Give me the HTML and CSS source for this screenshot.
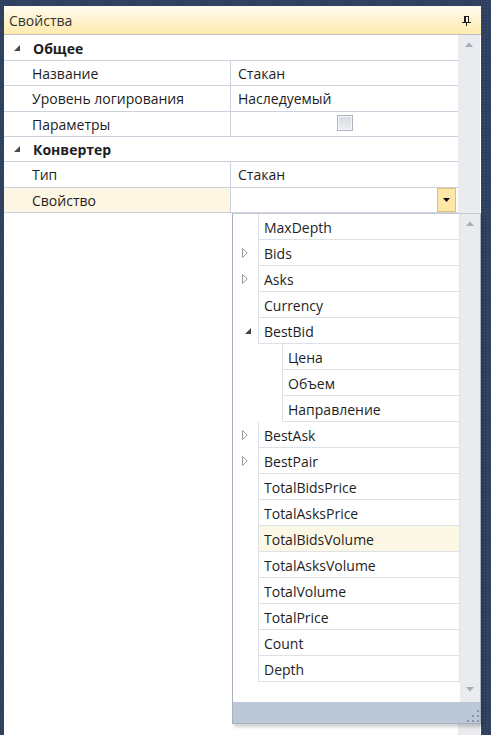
FILE: index.html
```html
<!DOCTYPE html>
<html>
<head>
<meta charset="utf-8">
<link rel="stylesheet" href="styles.css">
</head>
<body>
<div class="frame">
  <div class="panel">
    <div class="titlebar">
      <span class="title">Свойства</span>
      <svg class="pin" width="9" height="10" viewBox="0 0 9 10">
        <rect x="2" y="0" width="2" height="6" fill="#1e1e1e"/>
        <rect x="6" y="0" width="1" height="6" fill="#1e1e1e"/>
        <rect x="2" y="0" width="5" height="1" fill="#1e1e1e"/>
        <rect x="0" y="6" width="9" height="1" fill="#1e1e1e"/>
        <rect x="4" y="7" width="1" height="3" fill="#1e1e1e"/>
      </svg>
    </div>
    <div class="content">
      <div class="grid">
        <div class="row cat first">
          <svg class="exp" width="6" height="6" viewBox="0 0 6 6"><polygon points="6,0 6,6 0,6" fill="#4a4a4a"/></svg>
          <span class="cat-label">Общее</span>
        </div>
        <div class="row prop">
          <div class="name">Название</div>
          <div class="value">Стакан</div>
        </div>
        <div class="row prop">
          <div class="name">Уровень логирования</div>
          <div class="value">Наследуемый</div>
        </div>
        <div class="row prop">
          <div class="name">Параметры</div>
          <div class="value center"><span class="check"></span></div>
        </div>
        <div class="row cat">
          <svg class="exp" width="6" height="6" viewBox="0 0 6 6"><polygon points="6,0 6,6 0,6" fill="#4a4a4a"/></svg>
          <span class="cat-label">Конвертер</span>
        </div>
        <div class="row prop">
          <div class="name">Тип</div>
          <div class="value">Стакан</div>
        </div>
        <div class="row prop active">
          <div class="name">Свойство</div>
          <div class="value">
            <span class="dd-btn">
              <svg width="7" height="4" viewBox="0 0 7 4"><polygon points="0,0 7,0 3.5,4" fill="#111"/></svg>
            </span>
          </div>
        </div>
      </div>
      <div class="vscroll">
        <svg width="8" height="5" viewBox="0 0 8 5"><polygon points="0,5 4,0.5 8,5" fill="#a3adbd"/></svg>
      </div>
    </div>
  </div>

  <div class="popup">
    <div class="pop-body">
      <div class="list">
        <div class="item"><div class="ind"></div><div class="cell">MaxDepth</div></div>
        <div class="item"><div class="ind"><svg class="tri-c" width="6" height="10" viewBox="0 0 6 10"><polygon points="0.5,0.5 5.2,5 0.5,9.5" fill="none" stroke="#9a9a9a" stroke-width="1"/></svg></div><div class="cell">Bids</div></div>
        <div class="item"><div class="ind"><svg class="tri-c" width="6" height="10" viewBox="0 0 6 10"><polygon points="0.5,0.5 5.2,5 0.5,9.5" fill="none" stroke="#9a9a9a" stroke-width="1"/></svg></div><div class="cell">Asks</div></div>
        <div class="item"><div class="ind"></div><div class="cell">Currency</div></div>
        <div class="item"><div class="ind"><svg class="tri-e" width="6" height="6" viewBox="0 0 6 6"><polygon points="6,0 6,6 0,6" fill="#444"/></svg></div><div class="cell">BestBid</div></div>
        <div class="item child"><div class="ind"></div><div class="cell">Цена</div></div>
        <div class="item child"><div class="ind"></div><div class="cell">Объем</div></div>
        <div class="item child"><div class="ind"></div><div class="cell">Направление</div></div>
        <div class="item"><div class="ind"><svg class="tri-c" width="6" height="10" viewBox="0 0 6 10"><polygon points="0.5,0.5 5.2,5 0.5,9.5" fill="none" stroke="#9a9a9a" stroke-width="1"/></svg></div><div class="cell">BestAsk</div></div>
        <div class="item"><div class="ind"><svg class="tri-c" width="6" height="10" viewBox="0 0 6 10"><polygon points="0.5,0.5 5.2,5 0.5,9.5" fill="none" stroke="#9a9a9a" stroke-width="1"/></svg></div><div class="cell">BestPair</div></div>
        <div class="item"><div class="ind"></div><div class="cell">TotalBidsPrice</div></div>
        <div class="item"><div class="ind"></div><div class="cell">TotalAsksPrice</div></div>
        <div class="item hot"><div class="ind"></div><div class="cell">TotalBidsVolume</div></div>
        <div class="item"><div class="ind"></div><div class="cell">TotalAsksVolume</div></div>
        <div class="item"><div class="ind"></div><div class="cell">TotalVolume</div></div>
        <div class="item"><div class="ind"></div><div class="cell">TotalPrice</div></div>
        <div class="item"><div class="ind"></div><div class="cell">Count</div></div>
        <div class="item"><div class="ind"></div><div class="cell">Depth</div></div>
      </div>
      <div class="pscroll">
        <svg width="8" height="5" viewBox="0 0 8 5"><polygon points="0,5 4,0.5 8,5" fill="#a3adbd"/></svg>
        <svg width="8" height="5" viewBox="0 0 8 5"><polygon points="0,0 8,0 4,4.5" fill="#a3adbd"/></svg>
      </div>
    </div>
    <div class="grip">
      <svg class="grip-dots" width="12" height="12" viewBox="0 0 12 12">
        <rect x="10" y="0" width="2" height="2" fill="#8395b1"/>
        <rect x="5" y="5" width="2" height="2" fill="#8395b1"/>
        <rect x="10" y="5" width="2" height="2" fill="#8395b1"/>
        <rect x="0" y="10" width="2" height="2" fill="#8395b1"/>
        <rect x="5" y="10" width="2" height="2" fill="#8395b1"/>
        <rect x="10" y="10" width="2" height="2" fill="#8395b1"/>
      </svg>
    </div>
  </div>
</div>
</body>
</html>
```

FILE: styles.css
```css
html, body {
  margin: 0;
  padding: 0;
}

body {
  width: 491px;
  height: 735px;
  overflow: hidden;
  background-color: #2f405f;
  background-image: radial-gradient(circle, #3c5076 0.6px, transparent 0.9px);
  background-size: 3px 3px;
  font-family: "Open Sans", "Noto Sans", sans-serif;
  font-size: 14px;
  color: #1e1e1e;
}

.frame {
  position: relative;
  height: 735px;
  box-sizing: border-box;
  padding: 6px 10px 0 4px;
}

.panel {
  width: 477px;
  height: 100%;
  background: #ffffff;
  display: flex;
  flex-direction: column;
}

.titlebar {
  height: 28px;
  flex: none;
  border-bottom: 1px solid #b9bec7;
  background: linear-gradient(#fffbee, #ffeaae);
  border-radius: 2px 2px 0 0;
  display: flex;
  align-items: center;
  justify-content: space-between;
  padding: 0 10px 0 5px;
}

.title {
  color: #333333;
  font-size: 14px;
  padding-top: 1px;
}

.pin {
  display: block;
  margin-top: 2px;
}

.content {
  flex: 1;
  display: flex;
}

.grid {
  width: 454px;
}

.vscroll {
  width: 22px;
  background: #e9ebef;
  display: flex;
  justify-content: center;
  align-items: flex-start;
  padding-top: 7px;
  box-sizing: border-box;
}

.vscroll svg {
  display: block;
}

.row {
  height: 25.333px;
  box-sizing: border-box;
  border-bottom: 1px solid #cdd3de;
  display: flex;
  align-items: center;
}

.row.first {
  height: 26px;
}

.cat {
  padding-left: 10px;
}

.exp {
  display: block;
  margin-right: 13px;
}

.cat-label {
  font-weight: bold;
  padding-top: 1px;
}

.prop .name {
  width: 227px;
  height: 100%;
  box-sizing: border-box;
  padding-left: 28px;
  padding-top: 1px;
  border-right: 1px solid #cdd3de;
  display: flex;
  align-items: center;
}

.prop .value {
  flex: 1;
  height: 100%;
  box-sizing: border-box;
  padding-left: 7px;
  padding-top: 1px;
  display: flex;
  align-items: center;
}

.prop .value.center {
  padding-left: 0;
  padding-top: 0;
  justify-content: center;
}

.check {
  width: 14px;
  height: 14px;
  border: 1px solid #adb4bf;
  box-shadow: inset 0 0 0 1px #f6f7f9;
  background: linear-gradient(#d6dae1, #eceef2);
  margin-top: -1px;
}

.active .name {
  background: #fdf6e3;
}

.active .value {
  justify-content: flex-end;
  padding-right: 2px;
  padding-top: 0;
}

.dd-btn {
  width: 19px;
  height: 100%;
  box-sizing: border-box;
  background: #fde8a8;
  border: 1px solid #e2c26c;
  display: flex;
  align-items: center;
  justify-content: center;
}

.dd-btn svg {
  display: block;
}

/* Popup dropdown */
.popup {
  position: absolute;
  left: 232px;
  top: 213px;
  width: 249px;
  height: 511px;
  box-sizing: border-box;
  border: 1px solid #a7afbc;
  border-top-color: #c4c9d2;
  background: #ffffff;
  box-shadow: 2px 3px 3px rgba(0, 0, 0, 0.18);
  display: flex;
  flex-direction: column;
}

.pop-body {
  height: 488px;
  display: flex;
}

.list {
  width: 227px;
}

.item {
  height: 26px;
  display: flex;
}

.item .ind {
  width: 25px;
  flex: none;
  position: relative;
  display: flex;
  align-items: center;
}

.item.child .ind {
  width: 49px;
}

.item .cell {
  flex: 1;
  box-sizing: border-box;
  border-left: 1px solid #dde1e8;
  border-right: 1px solid #dde1e8;
  border-bottom: 1px solid #dde1e8;
  padding-left: 5px;
  padding-top: 1px;
  display: flex;
  align-items: center;
  color: #1e1e1e;
}

.item.hot .cell {
  background: #fdf7e6;
}

.tri-c {
  display: block;
  margin-left: 9px;
}

.tri-e {
  display: block;
  margin-left: 12px;
}

.pscroll {
  width: 20px;
  background: #e9ebef;
  box-sizing: border-box;
  padding: 7px 0 10px;
  display: flex;
  flex-direction: column;
  justify-content: space-between;
  align-items: center;
}

.pscroll svg {
  display: block;
}

.grip {
  height: 21px;
  background: #bcc7d8;
  position: relative;
}

.grip-dots {
  position: absolute;
  right: 1px;
  top: 8px;
  display: block;
}
```
